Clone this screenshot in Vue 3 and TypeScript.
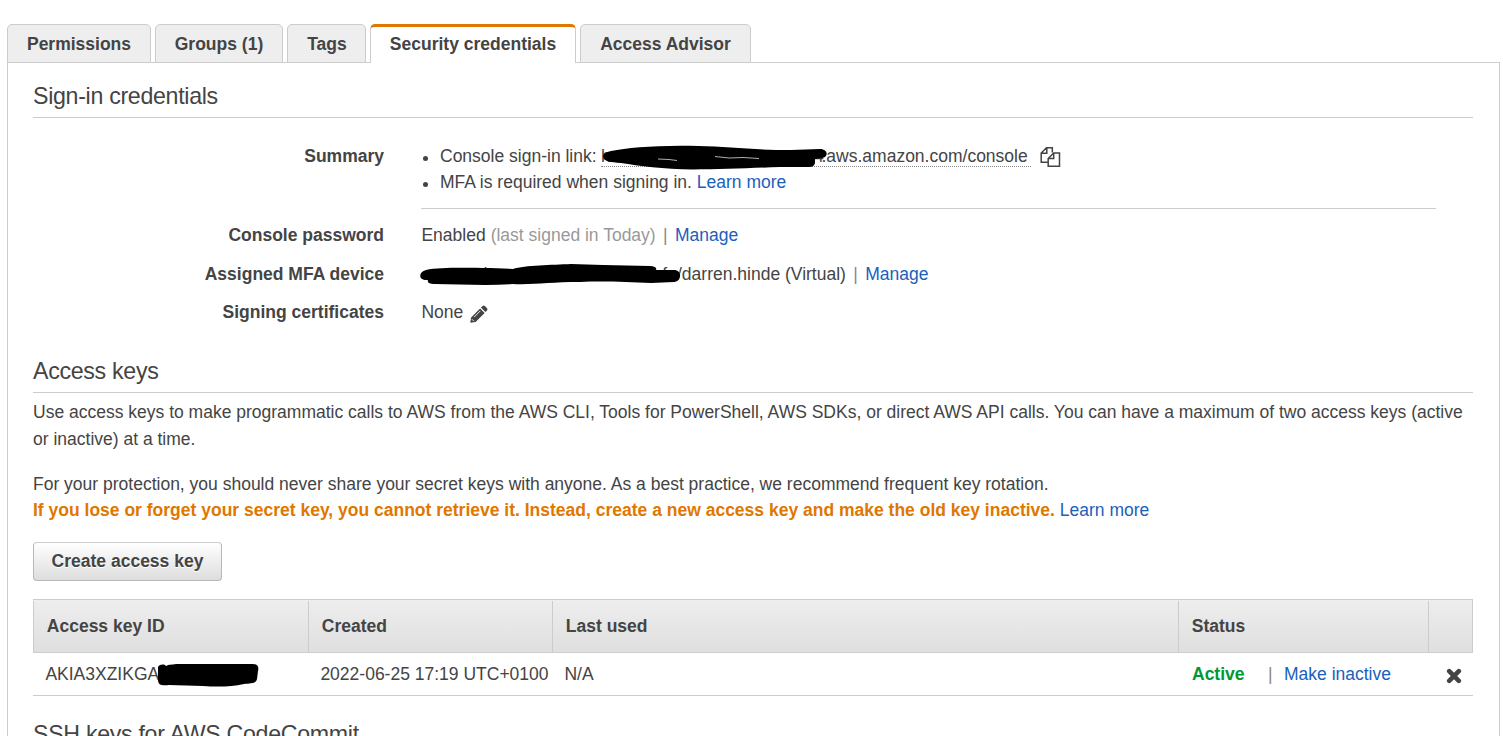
<script setup lang="ts">
interface Tab {
  id: string
  label: string
}

const tabs: Tab[] = [
  { id: 'permissions', label: 'Permissions' },
  { id: 'groups', label: 'Groups (1)' },
  { id: 'tags', label: 'Tags' },
  { id: 'security', label: 'Security credentials' },
  { id: 'advisor', label: 'Access Advisor' },
]
const activeTab = 'security'
</script>

<template>
  <main class="page">
    <nav class="tabs">
      <a v-for="tab in tabs" :key="tab.id" class="tab" :class="[tab.id, { active: tab.id === activeTab }]">{{ tab.label }}</a>
    </nav>
    <section class="panel">
      <h2>Sign-in credentials</h2>
      <dl class="details">
        <dt>Summary</dt>
        <dd class="summary">
          <ul>
            <li>
              <span class="lead">Console sign-in link:</span>
              <span class="signin">
                <span class="hidden-host">h</span><span class="domain"><span class="edge">4</span>.aws.amazon.com/console</span>
                <svg class="redact link-redact" width="228" height="28" viewBox="0 0 228 28">
                  <path d="M2 11C3 8 6 7 10 6C25 3 48 1 80 0.8C104 1 124 2 146 3.5C160 4.5 174 5 190 5L219 4C227 4 228 12 221 13L214 14L214 18C213 22 210 22 207 22L179 22C151 23 119 24.5 92 24.5C62 24 38 21 20 18C10 17 2 17 2 11Z" />
                  <path class="scratch" d="M57 14L68 14.5L76 15.5M114 11.5L128 13L142 12.5L158 13.5" />
                </svg>
              </span>
              <svg class="copy" width="22" height="22" viewBox="0 0 22 22">
                <path d="M7.5 16.3H1.2V7L6.5 1.7H12.3V6.5M6.8 1.7V7.3H1.2M8.2 20.2V12.5L13.7 7H19.5V20.2ZM13.7 7V12.5H8.2" />
              </svg>
            </li>
            <li>MFA is required when signing in. <a>Learn more</a></li>
          </ul>
        </dd>
        <dt>Console password</dt>
        <dd>Enabled <span class="muted">(last signed in Today)</span><span class="bar">|</span><a>Manage</a></dd>
        <dt>Assigned MFA device</dt>
        <dd class="device">
          <span class="arn"><span class="arn-a">h</span><span class="arn-b">fs</span>
            <svg class="redact device-redact" width="262" height="23" viewBox="0 0 262 23">
              <path d="M6 6C20 3 47 4 70 4L93 5C105 1 132 1 151 0L183 1L230 2C235 2 237 4 236 6L254 6C262 6 262 17 254 18L231 19C207 18 183 17 160 18C129 18 115 21 92 20C66 22 38 20 15 20C9 20 7 18 8 16C-2 17-2 8 6 6Z" />
            </svg>
          </span><span class="device-name">/darren.hinde (Virtual)</span><span class="bar">|</span><a>Manage</a>
        </dd>
        <dt>Signing certificates</dt>
        <dd class="none">None
          <svg class="pencil" width="18" height="18" viewBox="0 0 18 18">
            <path d="M12.6 0.9Q13.7 0 14.8 1L17.1 3.3Q18 4.4 17 5.5L15.4 7.1L10.9 2.6ZM10.1 3.4L14.6 7.9L5.6 16.9L0.3 17.8L1.1 12.4Z" />
            <path class="shine" d="M4.2 12L10.3 5.9M1.9 14.2L3.9 16.2" />
          </svg>
        </dd>
      </dl>

      <h2 class="keys-title">Access keys</h2>
      <p class="intro">Use access keys to make programmatic calls to AWS from the AWS CLI, Tools for PowerShell, AWS SDKs, or direct AWS API calls. You can have a maximum of two access keys (active<br>or inactive) at a time.</p>
      <p class="protect">For your protection, you should never share your secret keys with anyone. As a best practice, we recommend frequent key rotation.<br><strong>If you lose or forget your secret key, you cannot retrieve it. Instead, create a new access key and make the old key inactive.</strong> <a>Learn more</a></p>
      <button type="button">Create access key</button>

      <div class="table">
        <div class="row head">
          <span>Access key ID</span><span>Created</span><span>Last used</span><span>Status</span><span></span>
        </div>
        <div class="row body">
          <span class="key">AKIA3XZIKGA
            <svg class="redact key-redact" width="102" height="24" viewBox="0 0 102 24">
              <path d="M1 3C3 0 7 0 9 2C12 0 15 1 19 0H96C101 0 102 3 101 7L100 15C99 20 93 19 87 20C74 23 60 23 46 22L12 21C5 22 1 21 1 16Z" />
            </svg>
          </span>
          <span class="date">2022-06-25 17:19 UTC+0100</span>
          <span class="used">N/A</span>
          <span class="status"><b>Active</b><i>|</i><a>Make inactive</a></span>
          <span class="remove">
            <svg width="16" height="16" viewBox="0 0 16 16"><path d="M3.2 3.2L12.8 12.8M12.8 3.2L3.2 12.8" /></svg>
          </span>
        </div>
      </div>
      <h2 class="ssh">SSH keys for AWS CodeCommit</h2>
    </section>
  </main>
</template>

<style>
body { margin: 0; background: #fff; overflow: hidden; }
</style>

<style scoped>
* { box-sizing: border-box; }
.page {
  height: 736px;
  overflow: hidden;
  padding: 24px 3px 0 7px;
  font: 17.5px/26.25px "Liberation Sans", Arial, sans-serif;
  color: #444;
}
a { color: #1a60bd; }
.tabs { display: flex; gap: 4px; height: 39px; position: relative; z-index: 1; }
.tab {
  height: 39px;
  border: 1px solid #ccc;
  border-radius: 5px 5px 0 0;
  background: #eee;
  color: #444;
  font-weight: bold;
  text-align: center;
  line-height: 38px;
  white-space: nowrap;
}
.permissions { width: 144px; }
.groups { width: 128px; }
.tags { width: 79px; }
.tab.tags { padding-left: 1px; }
.security { width: 206px; }
.advisor { width: 171px; }
.tab.active { border-top: 3px solid #e07700; border-bottom: 0; background: #fff; line-height: 34px; }
.panel { margin-top: -1px; border: 1px solid #ccc; height: 720px; padding: 16px 26px 0 25px; }
h2 { margin: 0; height: 39px; border-bottom: 1px solid #ccc; font-size: 23.2px; letter-spacing: -0.31px; line-height: 34px; font-weight: normal; }
.details { margin: 25px 37px 0 0; display: grid; grid-template-columns: 351px 1fr; column-gap: 37px; grid-template-rows: 79px 39px 38px 39px; }
dt { text-align: right; font-weight: bold; }
dd { margin: 0; padding-left: 0.4px; white-space: nowrap; display: flex; }
dd, dt { height: 26px; }
.summary { display: block; height: 66px; padding-left: 0; border-bottom: 1px solid #ccc; }
ul { list-style: none; margin: 0; padding: 0; }
li { position: relative; height: 26px; padding-left: 19px; white-space: nowrap; }
li::before { content: ""; position: absolute; left: 2px; top: 13px; width: 5px; height: 5px; border-radius: 50%; background: #444; }
li:first-child { display: flex; }
.lead { width: 161px; }
.signin { position: relative; display: flex; width: 430px; height: 24px; border-bottom: 1px dotted #888; }
.hidden-host { width: 215px; }
.edge { display: inline-block; width: 5.5px; text-indent: -2px; }
.redact { position: absolute; fill: #000; }
.link-redact { left: 0; top: 2px; }
.scratch { fill: none; stroke: #ddd; stroke-width: 0.8; }
.copy { margin: 3px 0 0 9px; fill: none; stroke: #444; stroke-width: 1.5; }
.muted { color: #999; margin-left: 5px; }
.bar { color: #888; margin: 0 7.4px; }
.arn { position: relative; width: 255.6px; display: flex; }
.arn-a { margin-left: 62px; }
.arn-b { margin-left: 169px; }
.device-redact { left: -1px; top: 3px; }
.pencil { margin: 6px 0 0 7px; fill: #444; }
.shine { fill: none; stroke: #fff; stroke-width: 0.9; }
.keys-title { margin-top: 16px; }
p { margin: 0; white-space: nowrap; }
.intro { margin-top: 6px; line-height: 27px; height: 53px; }
.protect { margin-top: 19px; }
strong { color: #e07700; }
button {
  display: block;
  width: 189px;
  height: 39px;
  margin-top: 18px;
  padding: 0;
  border: 1px solid #b8b8b8;
  border-top-color: #ccc;
  border-radius: 4px;
  background: linear-gradient(#fff, #ddd);
  color: #444;
  font: bold 17.5px/35px "Liberation Sans", Arial, sans-serif;
  text-shadow: 0 1px #fff;
}
.table { margin-top: 18px; }
.row { display: grid; grid-template-columns: 275px 244px 626px 250px 45px; }
.head { height: 54px; border: 1px solid #ccc; border-left: 0; background: linear-gradient(#eee, #dfdfdf); font-weight: bold; line-height: 51px; }
.head span { border-left: 1px solid #ccc; margin-top: 1px; padding-left: 12.8px; }
.body { height: 43px; border-bottom: 1px solid #ccc; line-height: 42px; white-space: nowrap; }
.key { position: relative; padding-left: 12.4px; }
.key-redact { left: 124px; top: 11px; }
.date, .used { padding-left: 12.4px; }
.status { display: flex; padding-left: 14px; }
.status b { color: #093; width: 76px; }
.status i { font-style: normal; color: #888; width: 16px; }
.remove { padding: 15px 0 0 18px; line-height: 0; }
.remove path { stroke: #444; stroke-width: 4.6; stroke-linecap: round; fill: none; }
.ssh { margin-top: 21px; border: 0; }
</style>
